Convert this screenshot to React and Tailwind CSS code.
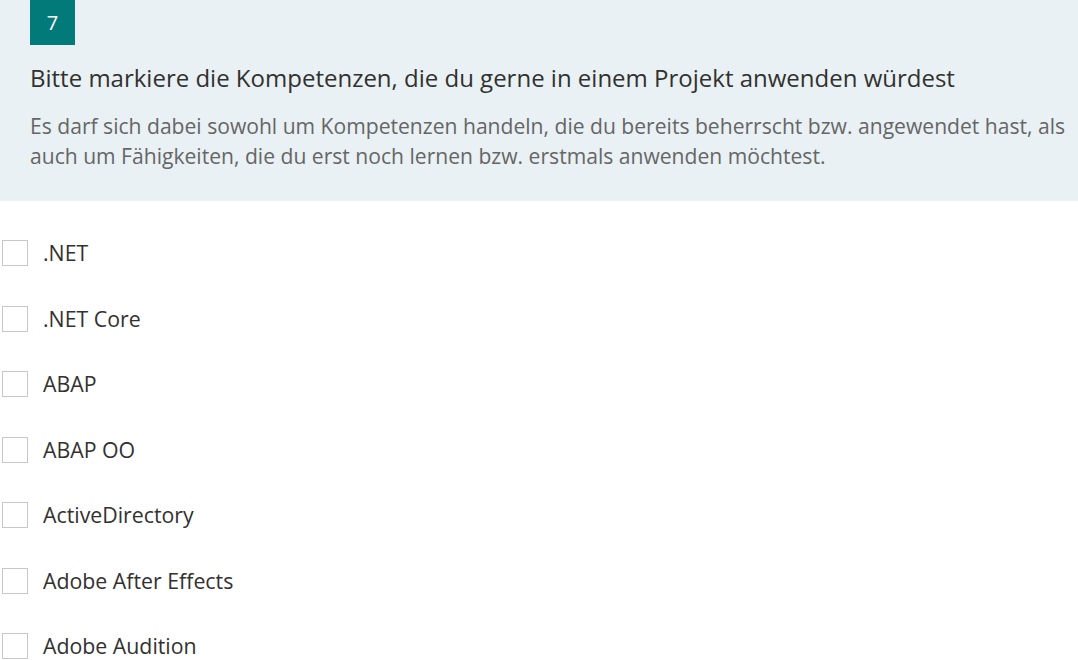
export default function App() {
  const items = [".NET", ".NET Core", "ABAP", "ABAP OO", "ActiveDirectory", "Adobe After Effects", "Adobe Audition"];
  return (
    <div className="w-[1078px] h-[660px] overflow-hidden bg-white" style={{ fontFamily: '"Open Sans", "Noto Sans", sans-serif' }}>
      <div className="bg-[#e9f1f4] h-[201px] pl-[30px] pr-[4px]">
        <div className="w-[45px] h-[45px] bg-[#037a7a] text-white flex items-center justify-center text-[20px]">7</div>
        <div className="mt-[16px] text-[24px] leading-[34px] text-[#323130] whitespace-nowrap">Bitte markiere die Kompetenzen, die du gerne in einem Projekt anwenden würdest</div>
        <div className="mt-[16px] text-[21.1px] leading-[30px] text-[#666666]">Es darf sich dabei sowohl um Kompetenzen handeln, die du bereits beherrscht bzw. angewendet hast, als auch um Fähigkeiten, die du erst noch lernen bzw. erstmals anwenden möchtest.</div>
      </div>
      <div className="pt-[39px] pl-[2px] flex flex-col gap-[39.5px]">
        {items.map((t) => (
          <label key={t} className="flex items-center h-[26px]">
            <span className="w-[26px] h-[26px] border border-[#c8c8c8] bg-white shrink-0" />
            <span className="ml-[15px] text-[21.3px] text-[#323130] whitespace-nowrap">{t}</span>
          </label>
        ))}
      </div>
    </div>
  );
}
